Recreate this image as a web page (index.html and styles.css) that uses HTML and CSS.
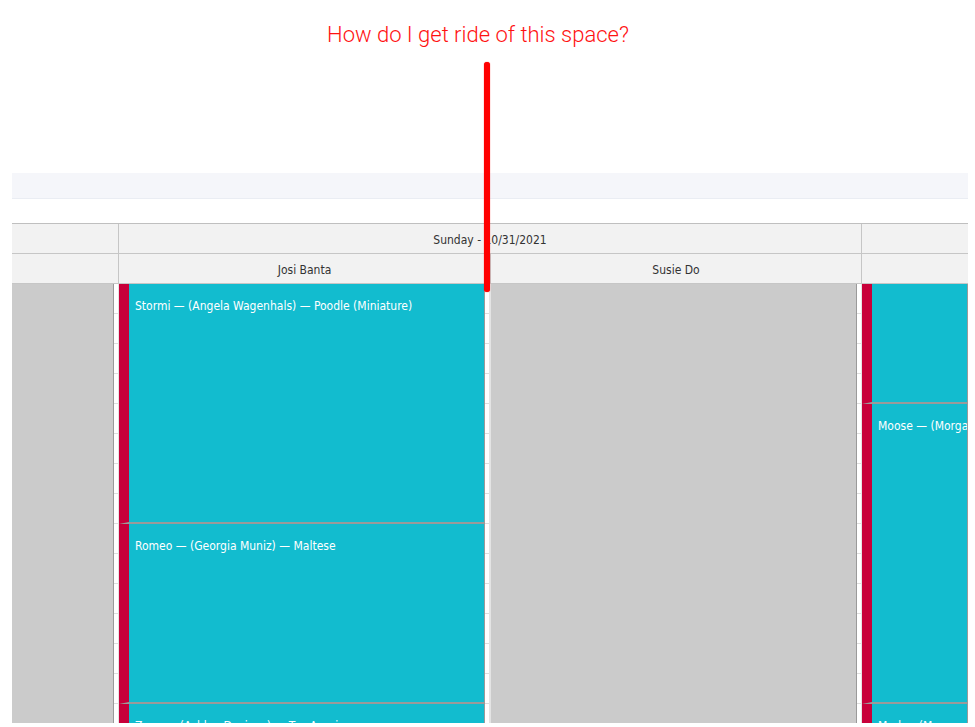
FILE: index.html
```html
<!DOCTYPE html>
<html>
<head>
<meta charset="utf-8">
<link rel="stylesheet" href="styles.css">
</head>
<body>
<div class="page">
  <div class="note">How do I get ride of this space?</div>
  <div class="band"></div>
  <div class="scheduler">
    <div class="head head-dates">
      <div class="hcell"></div>
      <div class="hcell bl">Sunday - 10/31/2021</div>
      <div class="hcell bl"></div>
    </div>
    <div class="head head-res">
      <div class="hcell"></div>
      <div class="hcell bl">Josi Banta</div>
      <div class="hcell bl">Susie Do</div>
      <div class="hcell bl"></div>
    </div>
    <div class="body">
      <div class="col col-time">
        <div class="lane off"></div>
        <div class="gutter"></div>
      </div>
      <div class="col bl">
        <div class="lane">
          <div class="event h8">Stormi — (Angela Wagenhals) — Poodle (Miniature)</div>
          <div class="event h6">Romeo — (Georgia Muniz) — Maltese</div>
          <div class="event h6">Zoey — (Ashlee Davison) — Toy Aussie</div>
        </div>
        <div class="gutter g5"></div>
      </div>
      <div class="col bl">
        <div class="lane off"></div>
        <div class="gutter"></div>
      </div>
      <div class="col bl">
        <div class="lane">
          <div class="event h4"></div>
          <div class="event h10">Moose — (Morgan Lee) — Labradoodle</div>
          <div class="event h6">Mud — (Morgan Lee) — Labradoodle</div>
        </div>
      </div>
    </div>
  </div>
  <div class="marker"></div>
</div>
</body>
</html>
```
FILE: styles.css
```css
html, body {
  margin: 0;
  padding: 0;
  background: #ffffff;
}

.page {
  position: relative;
  width: 956px;
  height: 723px;
  margin-left: 12px;
  overflow: hidden;
  font-family: "DejaVu Sans Condensed", "DejaVu Sans", sans-serif;
  font-size: 12px;
}

.note {
  height: 173px;
  box-sizing: border-box;
  padding: 21px 24px 0 0;
  text-align: center;
  font-family: Roboto, "Liberation Sans", sans-serif;
  font-weight: 300;
  font-size: 22px;
  line-height: 28px;
  color: #ff1212;
}

.band {
  height: 25px;
  background: #f5f6fa;
  border-bottom: 1px solid #eaedf3;
  margin-bottom: 24px;
}

.scheduler {
  border-top: 1px solid #bfbfbf;
}

.head {
  display: grid;
  height: 30px;
  background: #f2f2f2;
  border-bottom: 1px solid #c6c6c6;
  box-sizing: border-box;
  color: #333333;
}

.head-dates {
  grid-template-columns: 106px 743px 107px;
}

.head-res {
  grid-template-columns: 106px 372px 371px 107px;
}

.hcell {
  box-sizing: border-box;
  display: flex;
  align-items: center;
  justify-content: center;
  padding-top: 3px;
}

.bl {
  border-left: 1px solid #c6c6c6;
}

.body {
  display: grid;
  grid-template-columns: 106px 372px 371px 107px;
  height: 439px;
}

.col {
  display: flex;
  box-sizing: border-box;
  min-width: 0;
}

.body .bl {
  border-left: 1px solid #e4e4e4;
}

.col-time .lane {
  border-right: 1px solid #9a9a9a;
}

.lane {
  flex: 1;
  min-width: 0;
  display: flex;
  flex-direction: column;
}

.lane.off {
  background: #cbcbcb;
  border-right: 1px solid #9a9a9a;
}

.gutter {
  width: 4px;
  background: repeating-linear-gradient(to bottom, #ffffff 0, #ffffff 29px, #dedede 29px, #dedede 30px);
}

.gutter.g5 {
  width: 4px;
  border-right: 1px solid #e4e4e4;
}

.event {
  box-sizing: border-box;
  flex-shrink: 0;
  background: #12bccf;
  border-left: 10px solid #c8003a;
  border-right: 1px solid #9a9a9a;
  border-bottom: 2px solid #9a9a9a;
  color: #ffffff;
  padding: 15px 6px 0 6px;
  line-height: 15px;
  white-space: nowrap;
  overflow: hidden;
}

.h4 { height: 120px; }
.h6 { height: 180px; }
.h8 { height: 240px; }
.h10 { height: 300px; }

.marker {
  position: absolute;
  left: 472px;
  top: 62px;
  width: 6px;
  height: 230px;
  background: #ff0000;
  border-radius: 3px;
  box-shadow: 0 0 1px #ff0000;
}
```
